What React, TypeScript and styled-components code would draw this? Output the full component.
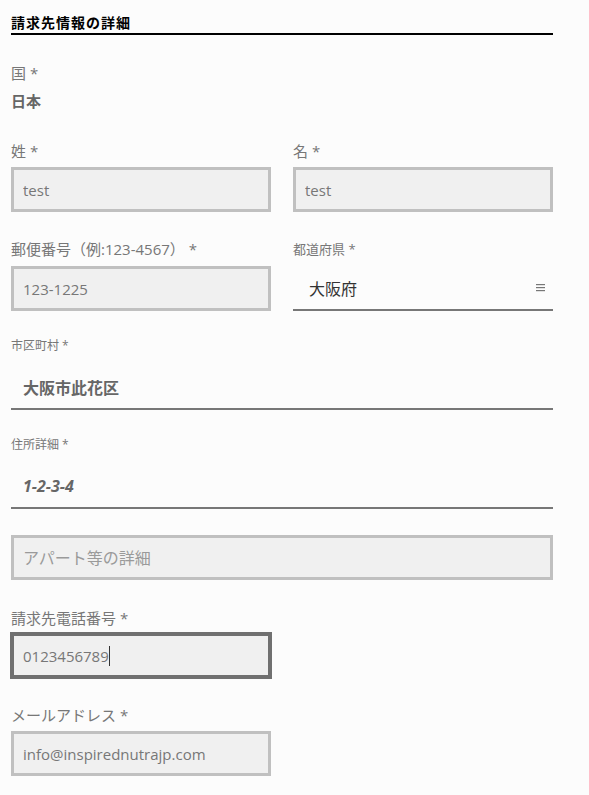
import styled, { createGlobalStyle } from 'styled-components'

const GlobalStyle = createGlobalStyle`
  html, body {
    margin: 0;
    padding: 0;
    background: #fcfcfc;
  }
  body {
    font-family: "Open Sans", "Noto Sans CJK JP", sans-serif;
    color: #777;
  }
`

const Page = styled.div`
  width: 542px;
  padding: 0 36px 20px 11px;
`

const Heading = styled.h2`
  margin: 0;
  padding-top: 13px;
  font-size: 14px;
  line-height: 20px;
  font-weight: 700;
  letter-spacing: 1px;
  color: #000;
  border-bottom: 2px solid #000;
`

const Row = styled.div<{ $top?: number }>`
  display: grid;
  grid-template-columns: 260px 260px;
  column-gap: 22px;
  align-items: start;
  margin-top: ${(p) => p.$top ?? 28}px;
`

const Field = styled.div<{ $top?: number }>`
  display: flex;
  flex-direction: column;
  margin-top: ${(p) => p.$top ?? 0}px;
`

const Label = styled.label<{ $size?: number; $gap?: number }>`
  display: block;
  font-size: ${(p) => p.$size ?? 15}px;
  line-height: 20px;
  color: #777;
  margin-bottom: ${(p) => p.$gap ?? 6}px;
  white-space: nowrap;
`

const StaticValue = styled.div`
  font-size: 15px;
  line-height: 20px;
  font-weight: 700;
  color: #666;
`

const TextBox = styled.input<{ $wide?: boolean }>`
  box-sizing: border-box;
  width: ${(p) => (p.$wide ? '542px' : '260px')};
  height: 45px;
  margin: 0;
  padding: 0 9px;
  border: 3px solid #c0c0c0;
  background: #f0f0f0;
  font-family: "Open Sans", "Noto Sans CJK JP", sans-serif;
  font-size: ${(p) => (p.$wide ? 16 : 15)}px;
  color: #777;
  outline: none;

  &::placeholder {
    color: #9a9a9a;
  }
`

const FocusedBox = styled.div`
  box-sizing: border-box;
  width: 260px;
  height: 45px;
  display: flex;
  align-items: center;
  padding: 0 9px;
  border: 3px solid #707070;
  box-shadow: 0 0 0 1px #707070;
  background: #f0f0f0;
  font-size: 15px;
  color: #777;
`

const Caret = styled.span`
  display: inline-block;
  width: 1px;
  height: 20px;
  background: #333;
`

const LineBox = styled.div<{ $indent?: number }>`
  box-sizing: border-box;
  height: 45px;
  display: flex;
  align-items: center;
  justify-content: space-between;
  padding: 0 8px 0 ${(p) => p.$indent ?? 12}px;
  border-bottom: 2px solid #777;
`

const LineText = styled.span<{ $bold?: boolean; $italic?: boolean }>`
  font-size: 16px;
  font-weight: ${(p) => (p.$bold ? 700 : 400)};
  font-style: ${(p) => (p.$italic ? 'italic' : 'normal')};
  color: ${(p) => (p.$bold ? '#666' : '#333')};
`

const MenuIcon = () => (
  <svg width="9" height="8" viewBox="0 0 9 8" aria-hidden="true">
    <rect x="0" y="0" width="9" height="1.2" fill="#777" />
    <rect x="0" y="3" width="9" height="1.2" fill="#777" />
    <rect x="0" y="6" width="9" height="1.2" fill="#777" />
  </svg>
)

const App = () => {
  return (
    <>
      <GlobalStyle />
      <Page>
        <Heading>請求先情報の詳細</Heading>

        <Field $top={28}>
          <Label $gap={8}>国 *</Label>
          <StaticValue>日本</StaticValue>
        </Field>

        <Row $top={30}>
          <Field>
            <Label>姓 *</Label>
            <TextBox readOnly value="test" />
          </Field>
          <Field>
            <Label>名 *</Label>
            <TextBox readOnly value="test" />
          </Field>
        </Row>

        <Row $top={27}>
          <Field>
            <Label $gap={7}>郵便番号（例:123-4567） *</Label>
            <TextBox readOnly value="123-1225" />
          </Field>
          <Field>
            <Label $size={13} $gap={7}>都道府県 *</Label>
            <LineBox $indent={16}>
              <LineText>大阪府</LineText>
              <MenuIcon />
            </LineBox>
          </Field>
        </Row>

        <Field $top={25}>
          <Label $size={12} $gap={9}>市区町村 *</Label>
          <LineBox>
            <LineText $bold>大阪市此花区</LineText>
          </LineBox>
        </Field>

        <Field $top={25}>
          <Label $size={12} $gap={9}>住所詳細 *</Label>
          <LineBox>
            <LineText $bold $italic>1-2-3-4</LineText>
          </LineBox>
        </Field>

        <Field $top={26}>
          <TextBox $wide readOnly placeholder="アパート等の詳細" />
        </Field>

        <Field $top={28}>
          <Label $gap={5}>請求先電話番号 *</Label>
          <FocusedBox>
            0123456789
            <Caret />
          </FocusedBox>
        </Field>

        <Field $top={27}>
          <Label>メールアドレス *</Label>
          <TextBox readOnly value="info@inspirednutrajp.com" />
        </Field>
      </Page>
    </>
  )
}

export default App
